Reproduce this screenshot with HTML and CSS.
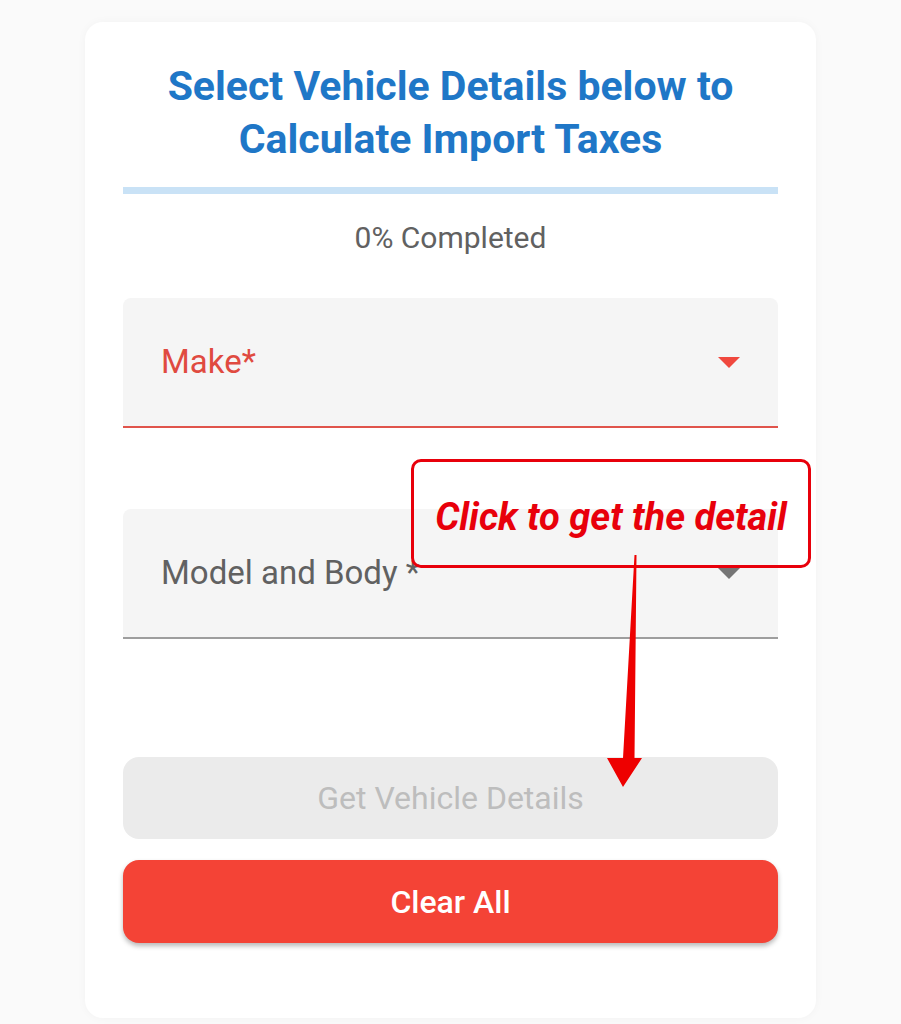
FILE: index.html
```html
<!DOCTYPE html>
<html lang="en">
<head>
<meta charset="utf-8">
<title>Import Tax Calculator</title>
<link rel="stylesheet" href="styles.css">
</head>
<body>
<div class="page">
  <div class="card">
    <h1 class="title">Select Vehicle Details below to<br>Calculate Import Taxes</h1>
    <div class="progress"><div class="progress-fill"></div></div>
    <div class="progress-text">0% Completed</div>

    <div class="field field-error">
      <span class="field-label">Make*</span>
      <span class="caret"></span>
    </div>

    <div class="field field-normal">
      <span class="field-label">Model and Body *</span>
      <span class="caret"></span>
    </div>

    <button class="btn btn-disabled" type="button">Get Vehicle Details</button>
    <button class="btn btn-clear" type="button">Clear All</button>
  </div>

  <div class="callout">Click to get the detail</div>
  <svg class="pointer" width="50" height="235" viewBox="0 0 50 235" aria-hidden="true">
    <polygon points="34.5,0 36.5,0 34.5,203 42,203 23,232 7,203 23,203" fill="#ee0000"/>
  </svg>
</div>
</body>
</html>
```

FILE: styles.css
```css
* { box-sizing: border-box; }

html, body {
  margin: 0;
  padding: 0;
  background: #fafafa;
  font-family: Roboto, "Noto Sans", "Liberation Sans", sans-serif;
}

.page {
  position: relative;
  width: 901px;
  height: 1024px;
  padding-top: 22px;
  overflow: hidden;
}

.card {
  margin-left: 85px;
  width: 731px;
  height: 996px;
  background: #ffffff;
  border-radius: 18px;
  box-shadow: 0 0 10px rgba(0, 0, 0, 0.035);
  padding: 38px 38px 0;
  display: flex;
  flex-direction: column;
}

.title {
  margin: 0;
  text-align: center;
  color: #1f77c7;
  font-size: 41px;
  font-weight: 700;
  line-height: 53px;
  white-space: nowrap;
}

.progress {
  margin-top: 21px;
  height: 7px;
  background: #c9e2f6;
}

.progress-fill {
  width: 0;
  height: 100%;
  background: #1f77c7;
}

.progress-text {
  margin-top: 29px;
  text-align: center;
  color: #616161;
  font-size: 30px;
  line-height: 30px;
}

.field {
  height: 130px;
  background: #f5f5f5;
  border-radius: 8px 8px 0 0;
  border-bottom: 2px solid #9e9e9e;
  padding: 0 38px 0 38px;
  display: flex;
  align-items: center;
  justify-content: space-between;
}

.field-error {
  margin-top: 45px;
  border-bottom-color: #e0544b;
}

.field-normal {
  margin-top: 81px;
}

.field-label {
  font-size: 33px;
  line-height: 40px;
  color: #616161;
}

.field-error .field-label {
  color: #e04a40;
}

.caret {
  width: 0;
  height: 0;
  border-left: 11px solid transparent;
  border-right: 11px solid transparent;
  border-top: 11px solid #757575;
}

.field-error .caret {
  border-top-color: #f0483e;
}

.btn {
  display: block;
  width: 100%;
  height: 82px;
  border: none;
  border-radius: 16px;
  font-family: Roboto, "Noto Sans", "Liberation Sans", sans-serif;
  font-size: 32px;
  padding: 0;
}

.btn-disabled {
  margin-top: 118px;
  background: #ebebeb;
  color: #bdbdbd;
}

.btn-clear {
  margin-top: 21px;
  height: 83px;
  background: #f44336;
  color: #ffffff;
  font-weight: 500;
  box-shadow: 0 3px 5px rgba(0, 0, 0, 0.28);
}

.callout {
  position: absolute;
  left: 411px;
  top: 459px;
  width: 400px;
  height: 109px;
  border: 3px solid #e8000b;
  border-radius: 10px;
  display: flex;
  align-items: center;
  justify-content: center;
  padding-top: 6px;
  color: #e8000b;
  font-size: 38px;
  font-weight: 700;
  font-style: italic;
  white-space: nowrap;
}

.pointer {
  position: absolute;
  left: 600px;
  top: 555px;
}
```
